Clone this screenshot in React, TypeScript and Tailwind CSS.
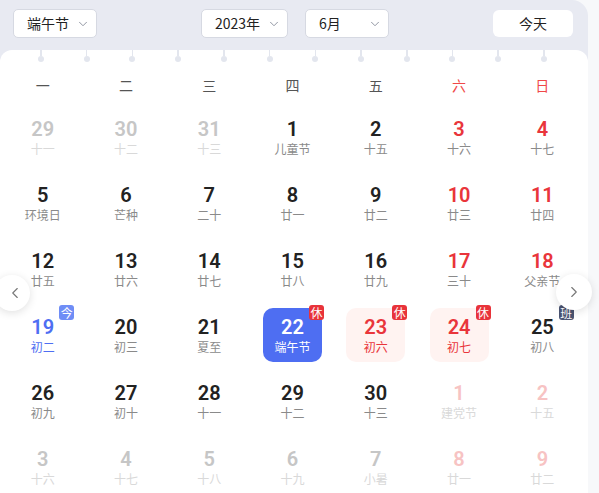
import { ChevronDown, ChevronLeft, ChevronRight } from 'lucide-react';

type Day = {
  n: number;
  sub: string;
  kind?: 'faded' | 'fadedRed' | 'red' | 'today' | 'selected' | 'holiday';
  badge?: '休' | '班' | '今';
};

const WEEKDAYS = ['一', '二', '三', '四', '五', '六', '日'];

const ROWS: Day[][] = [
  [
    { n: 29, sub: '十一', kind: 'faded' },
    { n: 30, sub: '十二', kind: 'faded' },
    { n: 31, sub: '十三', kind: 'faded' },
    { n: 1, sub: '儿童节' },
    { n: 2, sub: '十五' },
    { n: 3, sub: '十六', kind: 'red' },
    { n: 4, sub: '十七', kind: 'red' },
  ],
  [
    { n: 5, sub: '环境日' },
    { n: 6, sub: '芒种' },
    { n: 7, sub: '二十' },
    { n: 8, sub: '廿一' },
    { n: 9, sub: '廿二' },
    { n: 10, sub: '廿三', kind: 'red' },
    { n: 11, sub: '廿四', kind: 'red' },
  ],
  [
    { n: 12, sub: '廿五' },
    { n: 13, sub: '廿六' },
    { n: 14, sub: '廿七' },
    { n: 15, sub: '廿八' },
    { n: 16, sub: '廿九' },
    { n: 17, sub: '三十', kind: 'red' },
    { n: 18, sub: '父亲节', kind: 'red' },
  ],
  [
    { n: 19, sub: '初二', kind: 'today', badge: '今' },
    { n: 20, sub: '初三' },
    { n: 21, sub: '夏至' },
    { n: 22, sub: '端午节', kind: 'selected', badge: '休' },
    { n: 23, sub: '初六', kind: 'holiday', badge: '休' },
    { n: 24, sub: '初七', kind: 'holiday', badge: '休' },
    { n: 25, sub: '初八', badge: '班' },
  ],
  [
    { n: 26, sub: '初九' },
    { n: 27, sub: '初十' },
    { n: 28, sub: '十一' },
    { n: 29, sub: '十二' },
    { n: 30, sub: '十三' },
    { n: 1, sub: '建党节', kind: 'fadedRed' },
    { n: 2, sub: '十五', kind: 'fadedRed' },
  ],
  [
    { n: 3, sub: '十六', kind: 'faded' },
    { n: 4, sub: '十七', kind: 'faded' },
    { n: 5, sub: '十八', kind: 'faded' },
    { n: 6, sub: '十九', kind: 'faded' },
    { n: 7, sub: '小暑', kind: 'faded' },
    { n: 8, sub: '廿一', kind: 'fadedRed' },
    { n: 9, sub: '廿二', kind: 'fadedRed' },
  ],
];

function Select({ label, width }: { label: string; width: string }) {
  return (
    <div
      className={`flex h-[29px] ${width} items-center justify-between rounded-[5px] border border-[#d6d9e2] bg-white pl-[13px] pr-[6px] text-[14px] text-[#222]`}
    >
      <span>{label}</span>
      <ChevronDown className="h-[14px] w-[14px] text-[#8a8f9c]" strokeWidth={1.6} />
    </div>
  );
}

function DayCell({ d }: { d: Day }) {
  const numColor =
    d.kind === 'faded'
      ? 'text-[#c6c6c6]'
      : d.kind === 'fadedRed'
        ? 'text-[#f7c3c3]'
        : d.kind === 'red' || d.kind === 'holiday'
          ? 'text-[#e9353b]'
          : d.kind === 'today'
            ? 'text-[#4e6ef2]'
            : d.kind === 'selected'
              ? 'text-white'
              : 'text-[#222]';
  const subColor =
    d.kind === 'faded' || d.kind === 'fadedRed'
      ? 'text-[#d9d9d9]'
      : d.kind === 'holiday'
        ? 'text-[#e9353b]'
        : d.kind === 'today'
          ? 'text-[#4e6ef2]'
          : d.kind === 'selected'
            ? 'text-white'
            : 'text-[#8a8a8a]';
  const boxBg =
    d.kind === 'selected' ? 'bg-[#4e6ef2]' : d.kind === 'holiday' ? 'bg-[#fff3f1]' : '';
  const badgeBg =
    d.badge === '今' ? 'bg-[#6f8df6]' : d.badge === '班' ? 'bg-[#4a5371]' : 'bg-[#e8333a]';

  return (
    <div className="flex h-[66px] items-center justify-center">
      <div
        className={`relative flex h-[54px] w-[59px] flex-col items-center justify-center rounded-[10px] ${boxBg}`}
      >
        <span
          className={`font-['Roboto'] text-[20px] font-semibold leading-[22px] ${numColor}`}
        >
          {d.n}
        </span>
        <span className={`mt-[1px] text-[12px] leading-[16px] ${subColor}`}>{d.sub}</span>
        {d.badge && (
          <span
            className={`absolute right-[-2px] top-[-3px] flex h-[15px] w-[15px] items-center justify-center rounded-[3px] text-[12px] leading-none text-white ${badgeBg}`}
          >
            {d.badge}
          </span>
        )}
      </div>
    </div>
  );
}

export default function App() {
  return (
    <div className="relative h-[493px] w-[599px] overflow-hidden bg-[#f7f8fa] font-['Noto_Sans_CJK_SC',sans-serif]">
      <div className="w-[588px] rounded-tr-[16px] bg-[#e8eaf2]">
        <header className="flex h-[50px] items-start pl-[13px] pt-[9px]">
          <Select label="端午节" width="w-[84px]" />
          <div className="ml-[104px]">
            <Select label="2023年" width="w-[87px]" />
          </div>
          <div className="ml-[17px]">
            <Select label="6月" width="w-[84px]" />
          </div>
          <button className="ml-[104px] mt-[1px] flex h-[27px] w-[80px] items-center justify-center rounded-[6px] bg-white text-[14px] text-[#222]">
            今天
          </button>
        </header>

        <section className="h-[443px] rounded-t-[12px] bg-white">
          <div className="ml-[38px] flex h-[16px] w-[509px] justify-between">
            {Array.from({ length: 12 }).map((_, i) => (
              <div key={i} className="flex w-[6px] flex-col items-center">
                <div className="h-[6px] w-[1.5px] bg-[#e3e6ee]" />
                <div className="h-[6px] w-[6px] rounded-full bg-[#e3e6ee]" />
              </div>
            ))}
          </div>

          <div className="ml-[1px] grid w-[583px] grid-cols-7">
            {WEEKDAYS.map((w, i) => (
              <div
                key={w}
                className={`flex h-[38px] items-center justify-center text-[14px] ${i >= 5 ? 'text-[#f04848]' : 'text-[#555]'}`}
              >
                {w}
              </div>
            ))}
            {ROWS.flat().map((d, i) => (
              <DayCell key={i} d={d} />
            ))}
          </div>
        </section>
      </div>

      <button className="absolute left-[-6px] top-[275px] flex h-[36px] w-[36px] items-center justify-center rounded-full bg-white shadow-[0_2px_8px_rgba(0,0,0,0.12)]">
        <ChevronLeft className="ml-[6px] h-[18px] w-[18px] text-[#777]" strokeWidth={1.5} />
      </button>
      <button className="absolute left-[556px] top-[274px] flex h-[36px] w-[36px] items-center justify-center rounded-full bg-white shadow-[0_2px_8px_rgba(0,0,0,0.12)]">
        <ChevronRight className="h-[18px] w-[18px] text-[#777]" strokeWidth={1.5} />
      </button>
    </div>
  );
}
